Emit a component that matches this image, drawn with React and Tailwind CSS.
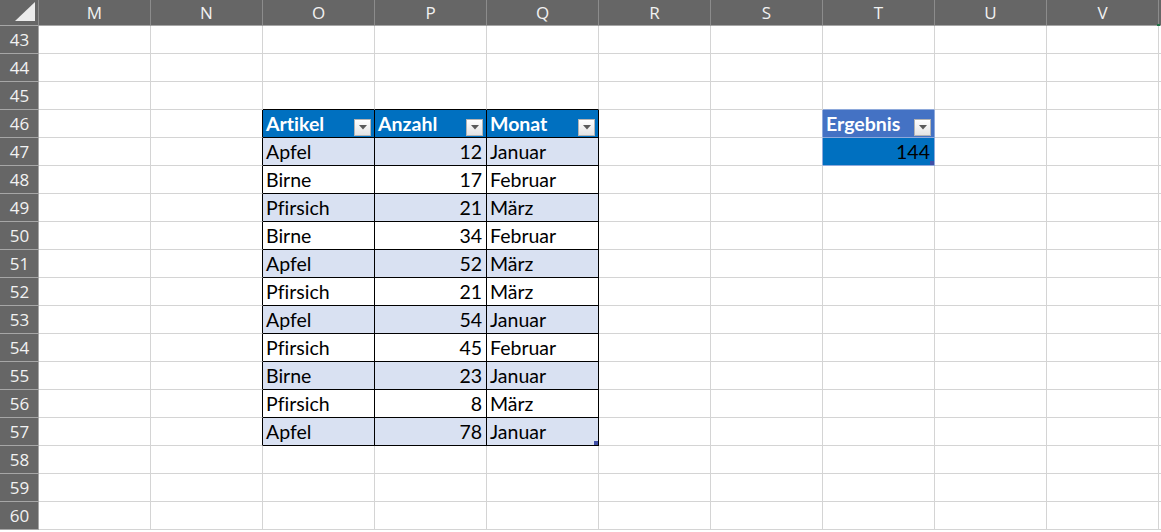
import React from 'react';

const COLS = ['M', 'N', 'O', 'P', 'Q', 'R', 'S', 'T', 'U', 'V'];
const FIRST_ROW = 43;
const ROW_COUNT = 18;

// table O46:Q57
const tableData = [
  ['Apfel', 12, 'Januar'],
  ['Birne', 17, 'Februar'],
  ['Pfirsich', 21, 'März'],
  ['Birne', 34, 'Februar'],
  ['Apfel', 52, 'März'],
  ['Pfirsich', 21, 'März'],
  ['Apfel', 54, 'Januar'],
  ['Pfirsich', 45, 'Februar'],
  ['Birne', 23, 'Januar'],
  ['Pfirsich', 8, 'März'],
  ['Apfel', 78, 'Januar'],
];
const tableHeaders = ['Artikel', 'Anzahl', 'Monat'];

const HEAD_ROW = 46;
const LAST_ROW = HEAD_ROW + tableData.length;

function FilterButton() {
  return (
    <span className="ml-auto mb-[1px] flex h-[17px] w-[17px] shrink-0 items-center justify-center border border-[#b4b4b4] bg-gradient-to-b from-white to-[#e4e4e4]">
      <svg width="8" height="5" viewBox="0 0 8 5">
        <path d="M0 0 L8 0 L4 4.5 Z" fill="#5a5a5a" />
      </svg>
    </span>
  );
}

function Cell({ row, col }) {
  const inTable = col >= 2 && col <= 4 && row >= HEAD_ROW && row <= LAST_ROW;
  const isResult = col === 7 && (row === 46 || row === 47);

  // borders of the cell itself (right and bottom)
  let br = 'border-r-[#d4d4d4]';
  let bb = 'border-b-[#d4d4d4]';
  if (inTable) {
    br = 'border-r-black';
    bb = 'border-b-black';
  } else if (col === 1 && row >= HEAD_ROW && row <= LAST_ROW) {
    br = 'border-r-black';
  } else if (row === HEAD_ROW - 1 && col >= 2 && col <= 4) {
    bb = 'border-b-black';
  }
  if (isResult) {
    br = 'border-r-[#8ea9db]';
    bb = 'border-b-[#8ea9db]';
  } else if (col === 6 && (row === 46 || row === 47)) {
    br = 'border-r-[#8ea9db]';
  } else if (col === 7 && row === 45) {
    bb = 'border-b-[#8ea9db]';
  }

  let bg = 'bg-white';
  let content = null;

  if (inTable) {
    const c = col - 2;
    if (row === HEAD_ROW) {
      bg = 'bg-[#0070c0]';
      content = (
        <>
          <span className="font-bold text-white">{tableHeaders[c]}</span>
          <FilterButton />
        </>
      );
    } else {
      const r = row - HEAD_ROW - 1;
      bg = r % 2 === 0 ? 'bg-[#d9e1f2]' : 'bg-white';
      const v = tableData[r][c];
      content =
        c === 1 ? <span className="ml-auto pr-[1px]">{v}</span> : <span>{v}</span>;
    }
  } else if (isResult) {
    if (row === 46) {
      bg = 'bg-[#4472c4]';
      content = (
        <>
          <span className="font-bold text-white">Ergebnis</span>
          <FilterButton />
        </>
      );
    } else {
      bg = 'bg-[#0070c0]';
      content = <span className="ml-auto pr-[1px]">144</span>;
    }
  }

  const handle =
    (inTable && row === LAST_ROW && col === 4) || (isResult && row === 47);

  return (
    <div
      className={`relative flex h-full w-[112px] shrink-0 items-end border-r border-b px-[3px] text-[19.5px] leading-[26px] text-black [font-variant-ligatures:none] ${br} ${bb} ${bg}`}
    >
      {content}
      {handle && (
        <span className="absolute right-0 bottom-0 h-[4px] w-[4px] bg-[#3f4ea6]" />
      )}
    </div>
  );
}

export default function App() {
  const rows = Array.from({ length: ROW_COUNT }, (_, i) => FIRST_ROW + i);

  return (
    <div
      className="h-[532px] w-[1161px] overflow-hidden bg-white"
      style={{ fontFamily: 'Lato, "Open Sans", sans-serif' }}
    >
      {/* column header */}
      <div
        className="flex h-[26px] bg-[#666666] text-[17px] text-[#f2f2f2]"
        style={{ fontFamily: '"Open Sans", "Noto Sans", sans-serif' }}
      >
        <div className="flex h-full w-[39px] shrink-0 items-start justify-end border-r border-b border-r-[#8c8c8c] border-b-[#a6a6a6] pt-[2px] pr-[2px]">
          <svg width="21" height="20" viewBox="0 0 21 20">
            <path d="M0 19 L20 19 L20 0 Z" fill="#ececec" />
          </svg>
        </div>
        {COLS.map((c) => (
          <div
            key={c}
            className="relative flex h-full w-[112px] shrink-0 items-center justify-center border-r border-b border-r-[#8c8c8c] border-b-[#a6a6a6] leading-none"
          >
            {c}
            {c === 'V' && (
              <span className="absolute right-[-2px] bottom-[-1px] h-[2px] w-[3px] bg-[#217346]" />
            )}
          </div>
        ))}
        <div className="h-full flex-1 border-b border-b-[#a6a6a6]" />
      </div>

      {rows.map((r) => (
        <div key={r} className="flex h-[28px]">
          <div
            className="flex h-full w-[39px] shrink-0 items-center justify-center border-r border-b border-r-[#a6a6a6] border-b-[#a6a6a6] bg-[#666666] pl-[1px] text-[17px] text-[#f2f2f2]"
            style={{ fontFamily: '"Open Sans", "Noto Sans", sans-serif' }}
          >
            {r}
          </div>
          {COLS.map((_, ci) => (
            <Cell key={ci} row={r} col={ci} />
          ))}
          <div className="h-full flex-1 border-b border-b-[#d4d4d4]" />
        </div>
      ))}
    </div>
  );
}
